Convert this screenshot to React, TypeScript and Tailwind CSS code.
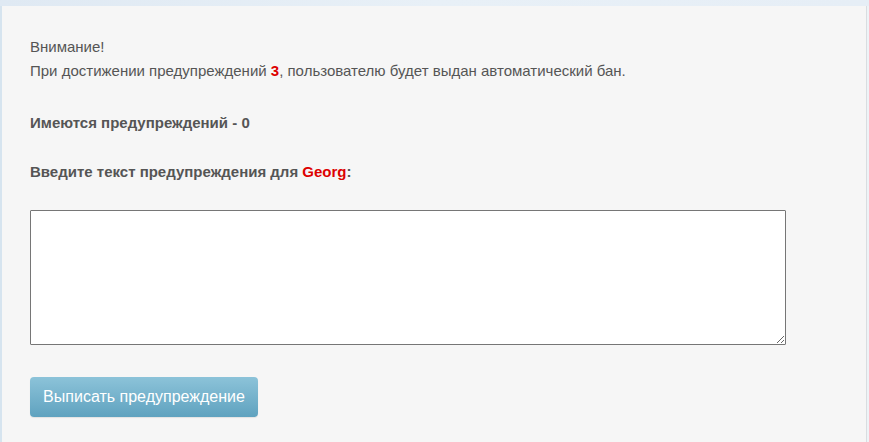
import React from "react";

export default function App() {
  return (
    <div className="w-[869px] h-[442px] overflow-hidden bg-[#e6eef6] flex flex-col" style={{ fontFamily: '"Liberation Sans", Arial, sans-serif' }}>
      <div className="h-[6px] shrink-0 bg-gradient-to-r from-[#dfe9f3] via-[#e8f0f7] to-[#e6eef6]" />
      <div className="flex-1 flex">
        <div className="w-[2px] bg-[#d6e4ef]" />
        <div className="flex-1 bg-[#f6f6f6] border-r border-r-[#d9dde0] pl-[28px] pt-[29px] text-[15px] leading-[24px] text-[#555555]">
          <div>Внимание!</div>
          <div>
            При достижении предупреждений <b className="text-[#dd0000]">3</b>, пользователю будет выдан автоматический бан.
          </div>
          <div className="mt-[28px] font-bold">Имеются предупреждений - 0</div>
          <div className="mt-[25px] font-bold">
            Введите текст предупреждения для <span className="text-[#dd0000]">Georg</span>:
          </div>
          <textarea className="mt-[26px] block w-[756px] h-[135px] bg-white border border-[#767676] rounded-[1px]" />
          <button className="mt-[32px] h-[40px] w-[228px] rounded-[4px] bg-gradient-to-b from-[#8cc3d9] to-[#5fa2bf] text-white text-[16px] leading-[20px] shadow-[0_1px_1px_rgba(0,0,0,0.08)]">
            Выписать предупреждение
          </button>
        </div>
        <div className="w-[2px] bg-[#eef3f7]" />
      </div>
    </div>
  );
}
